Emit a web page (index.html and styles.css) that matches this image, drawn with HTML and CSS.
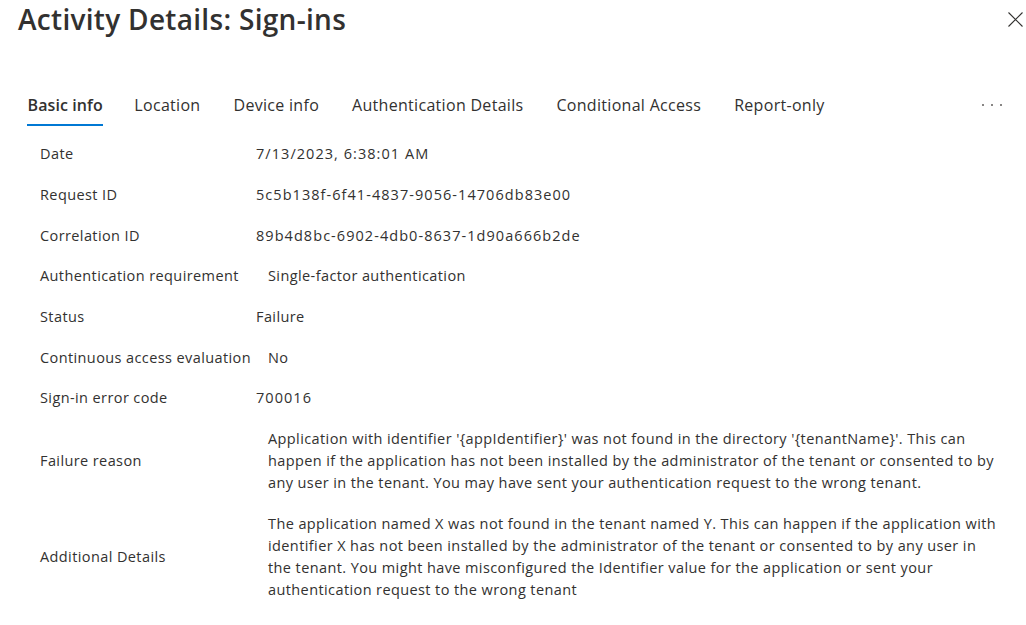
FILE: index.html
```html
<!DOCTYPE html>
<html lang="en">
<head>
<meta charset="utf-8">
<title>Activity Details: Sign-ins</title>
<link rel="stylesheet" href="styles.css">
</head>
<body>
<div class="panel">
  <header class="head">
    <h1 class="title">Activity Details: Sign-ins</h1>
    <button class="close" aria-label="Close">
      <svg width="15" height="15" viewBox="0 0 15 15"><path d="M0.5 0.5 L14.5 14.5 M14.5 0.5 L0.5 14.5" stroke="#323130" stroke-width="1.1" fill="none"/></svg>
    </button>
  </header>
  <nav class="tabs">
    <div class="tab active">Basic info</div>
    <div class="tab">Location</div>
    <div class="tab">Device info</div>
    <div class="tab">Authentication Details</div>
    <div class="tab">Conditional Access</div>
    <div class="tab">Report-only</div>
    <div class="more" aria-label="More"><span></span><span></span><span></span></div>
  </nav>
  <div class="details">
    <div class="row"><div class="label">Date</div><div class="value num">7/13/2023, 6:38:01 AM</div></div>
    <div class="row"><div class="label">Request ID</div><div class="value num">5c5b138f-6f41-4837-9056-14706db83e00</div></div>
    <div class="row"><div class="label">Correlation ID</div><div class="value num">89b4d8bc-6902-4db0-8637-1d90a666b2de</div></div>
    <div class="row wide"><div class="label">Authentication requirement</div><div class="value">Single-factor authentication</div></div>
    <div class="row"><div class="label">Status</div><div class="value">Failure</div></div>
    <div class="row wide"><div class="label">Continuous access evaluation</div><div class="value">No</div></div>
    <div class="row"><div class="label">Sign-in error code</div><div class="value num">700016</div></div>
    <div class="row wide"><div class="label">Failure reason</div><div class="value long"><span>Application with identifier '{appIdentifier}' was not found in the directory '{tenantName}'. This can</span> <span>happen if the application has not been installed by the administrator of the tenant or consented to by</span> <span>any user in the tenant. You may have sent your authentication request to the wrong tenant.</span></div></div>
    <div class="row wide"><div class="label">Additional Details</div><div class="value long"><span>The application named X was not found in the tenant named Y. This can happen if the application with</span> <span>identifier X has not been installed by the administrator of the tenant or consented to by any user in</span> <span>the tenant. You might have misconfigured the Identifier value for the application or sent your</span> <span>authentication request to the wrong tenant</span></div></div>
  </div>
</div>
</body>
</html>
```

FILE: styles.css
```css
* { box-sizing: border-box; }
html, body { margin: 0; padding: 0; background: #ffffff; }
body {
  font-family: "Open Sans", "Noto Sans", sans-serif;
  color: #323130;
  width: 1026px;
  height: 625px;
  overflow: hidden;
}
.panel { display: flex; flex-direction: column; }
.head {
  display: flex;
  justify-content: space-between;
  align-items: flex-start;
  height: 86px;
  padding: 0 3px 0 18px;
}
.title {
  margin: 0;
  font-size: 28px;
  font-weight: 600;
  line-height: 38px;
  letter-spacing: 0.3px;
  color: #323130;
}
.close {
  border: 0;
  background: transparent;
  padding: 0;
  margin-top: 12px;
  width: 15px;
  height: 15px;
  display: flex;
}
.tabs {
  display: flex;
  align-items: flex-start;
  padding-left: 11px;
  padding-right: 24px;
}
.tab {
  font-size: 16px;
  line-height: 22px;
  padding: 8px 16.5px 0;
  color: #323130;
  letter-spacing: 0.3px;
}
.tab.active {
  font-weight: 600;
  letter-spacing: 0.1px;
  padding-right: 15px;
}
.tab.active::after {
  content: "";
  display: block;
  height: 2px;
  margin: 8px 0 0 -1px;
  background: #0078d4;
}
.more {
  margin-left: auto;
  display: flex;
  gap: 7px;
  padding-top: 18px;
}
.more span {
  width: 2px;
  height: 2px;
  border-radius: 50%;
  background: #605e5c;
}
.details {
  display: flex;
  flex-direction: column;
  padding: 8px 0 0 40px;
}
.row {
  display: flex;
  align-items: center;
  padding: 9.33px 0;
  font-size: 14.5px;
  line-height: 22px;
  letter-spacing: 0.4px;
}
.label { width: 216px; flex: none; }
.row.wide .label { width: 228px; }
.value { flex: 1; }
.value.num { letter-spacing: 1.05px; }
.value.long span { display: block; white-space: nowrap; }
```
